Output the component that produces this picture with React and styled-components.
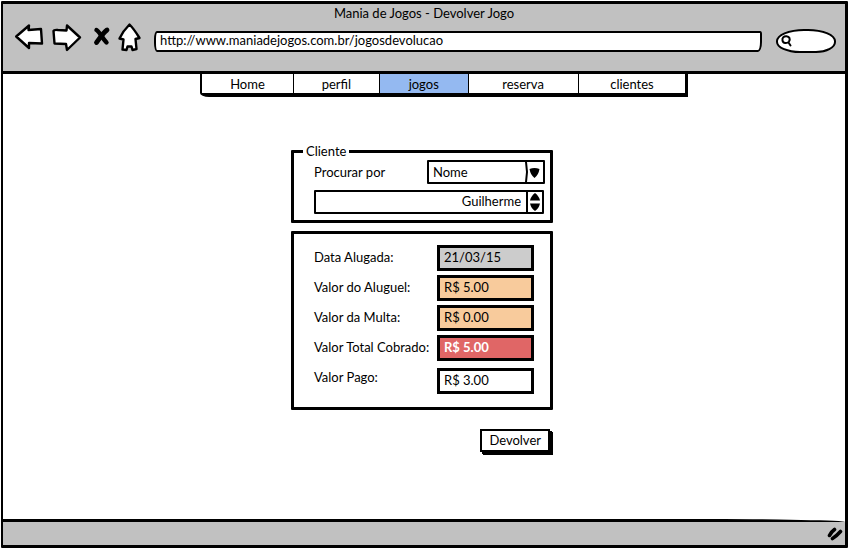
import React from "react";
import styled, { createGlobalStyle } from "styled-components";

const GlobalStyle = createGlobalStyle`
  * { box-sizing: border-box; }
  body { margin: 0; background: #fff; }
  body, button, input, select {
    font-family: Lato, "Open Sans", sans-serif;
    font-size: 13px;
    line-height: 18px;
    color: #000;
  }
`;

const BrowserWindow = styled.div`
  display: flex;
  flex-direction: column;
  min-height: 100vh;
  padding: 1px;
`;

const Frame = styled.div`
  flex: 1;
  display: flex;
  flex-direction: column;
  border: 3px solid #000;
  border-left-width: 2px;
  border-radius: 1px;
`;

const Chrome = styled.header`
  background: #c1c1c1;
  border-bottom: 3px solid #000;
  padding-bottom: 19px;
`;

const Title = styled.h1`
  margin: 0;
  font-size: 13px;
  font-weight: 400;
  line-height: 18px;
  text-align: center;
`;

const Toolbar = styled.div`
  display: flex;
  align-items: center;
  padding: 0 9px 0 12px;
  height: 30px;
`;

const ToolButton = styled.button`
  display: flex;
  padding: 0;
  border: 0;
  background: none;
  margin-right: ${(p) => p.$gap}px;

  svg { display: block; overflow: visible; }
`;

const AddressBar = styled.input`
  flex: 1;
  min-width: 0;
  height: 21px;
  margin-top: 8px;
  padding: 0 4px 2px;
  border: 2px solid #000;
  border-radius: 3px 2px 4px 3px / 8px 3px 10px 9px;
  background: #fff;
  outline: 0;
`;

const SearchBox = styled.label`
  display: flex;
  align-items: center;
  width: 60px;
  height: 24px;
  margin: 8px 0 0 14px;
  padding-left: 3px;
  border: 2px solid #000;
  border-radius: 28px 28px 20px 24px / 12px 12px 11px 11px;
  background: #fff;

  input {
    width: 34px;
    border: 0;
    padding: 0;
    background: none;
    outline: 0;
  }
`;

const Nav = styled.nav`
  align-self: flex-start;
  display: grid;
  grid-template-columns: 91fr 86fr 89fr 110fr 108fr;
  width: 58%;
  min-width: 420px;
  margin-left: 23.4%;
  border: solid #000;
  border-width: 0 3px 4px 2px;
  border-radius: 0 0 0 9px / 0 0 0 4px;
`;

const Tab = styled.a`
  height: 19px;
  line-height: 20px;
  text-align: center;
  text-decoration: none;
  color: #000;
  background: ${(p) => (p.$active ? "#94b9f1" : "#fff")};

  & + & { border-left: 1px solid #000; }
`;

const Content = styled.main`
  flex: 1;
  display: flex;
  flex-direction: column;
  align-items: center;
  padding: 45px 4px 24px 0;
`;

const Form = styled.form`
  display: flex;
  flex-direction: column;
  width: 262px;
`;

const ClientGroup = styled.fieldset`
  min-width: 0;
  margin: 0 0 8px;
  padding: 0 5px 6px 20px;
  border: 3px solid #000;
  border-radius: 1px;

  legend {
    margin-left: -11px;
    padding: 0 3px;
  }
`;

const SearchRow = styled.div`
  display: flex;
  justify-content: space-between;
  height: 24px;
  margin-bottom: 6px;

  label { line-height: 24px; }
`;

const FieldFrame = styled.div`
  display: flex;
  width: ${(p) => p.$width};
  height: 24px;
  border: 2px solid #000;
  border-radius: 1px;
  background: #fff;
`;

const SelectFrame = styled(FieldFrame)`
  position: relative;

  svg { position: absolute; right: 0; top: 0; pointer-events: none; }
`;

const Select = styled.select`
  appearance: none;
  width: 100%;
  border: 0;
  padding: 0 20px 0 4px;
  background: transparent;
  outline: 0;
`;

const NameInput = styled.input`
  flex: 1;
  min-width: 0;
  border: 0;
  padding: 0 5px 2px 4px;
  text-align: right;
  background: transparent;
  outline: 0;
`;

const Stepper = styled.div`
  display: flex;
  flex-direction: column;
  width: 16px;
  border-left: 2px solid #000;

  button {
    flex: 1;
    display: flex;
    align-items: center;
    justify-content: center;
    padding: 0;
    border: 0;
    background: none;
  }
`;

const Details = styled.section`
  display: flex;
  flex-direction: column;
  gap: 4px;
  padding: 11px 16px 13px 20px;
  border: 3px solid #000;
  border-radius: 1px;
`;

const DetailRow = styled.div`
  display: flex;
  justify-content: space-between;
  white-space: nowrap;

  &:last-child input { margin-top: 3px; }
  label { line-height: 24px; }
`;

const tones = {
  grey: ["#cccccc", "#000", 400],
  orange: ["#f8cb9c", "#000", 400],
  red: ["#e06666", "#fff", 700],
  plain: ["#fff", "#000", 400],
};

const ValueInput = styled.input`
  width: 97px;
  height: 26px;
  padding: 0 4px 2px;
  border: 3px solid #000;
  border-radius: 0;
  background: ${(p) => tones[p.$tone][0]};
  color: ${(p) => tones[p.$tone][1]};
  font-weight: ${(p) => tones[p.$tone][2]};
  outline: 0;
`;

const SubmitButton = styled.button`
  align-self: flex-end;
  height: 23px;
  margin: 19px 3px 0 0;
  padding: 0 7px 1px;
  border: 2px solid #000;
  border-radius: 0;
  background: #fff;
  box-shadow: 2px 2px 0 #000, 3px 3px 0 #000;
`;

const StatusBar = styled.footer`
  display: flex;
  align-items: center;
  justify-content: flex-end;
  height: 26px;
  padding-right: 2px;
  border-top: 3px solid #000;
  border-top-right-radius: 150px 3px;
  background: #c1c1c1;
`;

const ink = { stroke: "#000", strokeWidth: 2.4, strokeLinejoin: "round", strokeLinecap: "round", fill: "#fff" };

const BackIcon = () => (
  <svg width="28" height="26" viewBox="0 0 28 26">
    <path {...ink} d="M1.2 12.500 14 1.500 13.500 6 26 5 27 19.500 14 19 14 24Z" />
  </svg>
);

const ForwardIcon = () => (
  <svg width="29" height="27" viewBox="0 0 29 27">
    <path {...ink} d="M1.500 7Q2 5.500 6 6L14.500 6.500 15 1.500 28 13.500 15 26 14 20 2.500 19.500Z" />
  </svg>
);

const StopIcon = () => (
  <svg width="17" height="21" viewBox="0 0 17 21" fill="none" stroke="#000" strokeLinecap="round">
    <path strokeWidth="4.400" d="M3.500 3C6 4 9 11 13.500 15.500" />
    <path strokeWidth="4.800" d="M14 3C10 6 7 11 3.500 15.500" />
  </svg>
);

const HomeIcon = () => (
  <svg width="23" height="29" viewBox="0 0 23 29">
    <path {...ink} d="M11.500 1.500Q16 6 21.500 15L17.500 16 18.500 26 14.500 27 13.500 23.500 9.500 23.500 8.500 27 4.500 26.500 5.500 16.500 1.500 15.500Q5 8 11.500 1.500Z" />
  </svg>
);

const SearchIcon = () => (
  <svg width="12" height="12" viewBox="0 0 12 12" fill="none" stroke="#000" strokeWidth="2" strokeLinecap="round">
    <path d="M5.500 1.200C2.500 1 1 3 1.500 5.500 2 8.500 6 9 8 6.500 9.500 4 8.500 1.500 5.500 1.200M7.500 7.500 9.500 10.500" />
  </svg>
);

const DropIcon = () => (
  <svg width="18" height="20" viewBox="0 0 18 20">
    <path d="M1 0 2 10 1 20" fill="none" stroke="#000" strokeWidth="2" />
    <path d="M4.500 7Q9.500 5 14.500 7 13.500 13 9.500 16 5.500 13 4.500 7Z" />
  </svg>
);

const UpIcon = () => (
  <svg width="10" height="8" viewBox="0 0 10 8">
    <path d="M0 7.500Q1 3 5 0 9 3 10 7.500Z" />
  </svg>
);

const DownIcon = () => (
  <svg width="10" height="8" viewBox="0 0 10 8">
    <path d="M0 0.500 10 0.500Q9 5 5 8 1 5 0 0.500Z" />
  </svg>
);

const GripIcon = () => (
  <svg width="16" height="14" viewBox="0 0 16 14" fill="none" stroke="#000" strokeLinecap="round">
    <path strokeWidth="3.600" d="M2.500 8.500Q4 5 7.500 2.500M5.500 11.500Q9 9.500 13.500 4.500" />
  </svg>
);

const tools = [
  { label: "Voltar", gap: 9, Icon: BackIcon },
  { label: "Avançar", gap: 12, Icon: ForwardIcon },
  { label: "Parar", gap: 8, Icon: StopIcon },
  { label: "Início", gap: 13, Icon: HomeIcon },
];

const tabs = ["Home", "perfil", "jogos", "reserva", "clientes"];

const details = [
  { id: "data", label: "Data Alugada:", value: "21/03/15", tone: "grey" },
  { id: "aluguel", label: "Valor do Aluguel:", value: "R$ 5.00", tone: "orange" },
  { id: "multa", label: "Valor da Multa:", value: "R$ 0.00", tone: "orange" },
  { id: "total", label: "Valor Total Cobrado:", value: "R$ 5.00", tone: "red" },
  { id: "pago", label: "Valor Pago:", value: "R$ 3.00", tone: "plain" },
];

export default function App() {
  return (
    <BrowserWindow>
      <GlobalStyle />
      <Frame>
        <Chrome>
          <Title>Mania de Jogos - Devolver Jogo</Title>
          <Toolbar>
            {tools.map(({ label, gap, Icon }) => (
              <ToolButton key={label} type="button" aria-label={label} $gap={gap}>
                <Icon />
              </ToolButton>
            ))}
            <AddressBar aria-label="Endereço" defaultValue="http://www.maniadejogos.com.br/jogosdevolucao" />
            <SearchBox>
              <SearchIcon />
              <input type="text" aria-label="Pesquisar" />
            </SearchBox>
          </Toolbar>
        </Chrome>
        <Nav>
          {tabs.map((tab) => (
            <Tab key={tab} href={`#${tab}`} $active={tab === "jogos"}>
              {tab}
            </Tab>
          ))}
        </Nav>
        <Content>
          <Form onSubmit={(e) => e.preventDefault()}>
            <ClientGroup>
              <legend>Cliente</legend>
              <SearchRow>
                <label htmlFor="criterio">Procurar por</label>
                <SelectFrame $width="118px">
                  <Select id="criterio">
                    <option>Nome</option>
                  </Select>
                  <DropIcon />
                </SelectFrame>
              </SearchRow>
              <FieldFrame $width="230px">
                <NameInput aria-label="Nome do cliente" defaultValue="Guilherme" />
                <Stepper>
                  <button type="button" aria-label="Anterior"><UpIcon /></button>
                  <button type="button" aria-label="Próximo"><DownIcon /></button>
                </Stepper>
              </FieldFrame>
            </ClientGroup>
            <Details>
              {details.map(({ id, label, value, tone }) => (
                <DetailRow key={id}>
                  <label htmlFor={id}>{label}</label>
                  <ValueInput id={id} defaultValue={value} $tone={tone} />
                </DetailRow>
              ))}
            </Details>
            <SubmitButton type="submit">Devolver</SubmitButton>
          </Form>
        </Content>
        <StatusBar>
          <GripIcon />
        </StatusBar>
      </Frame>
    </BrowserWindow>
  );
}
